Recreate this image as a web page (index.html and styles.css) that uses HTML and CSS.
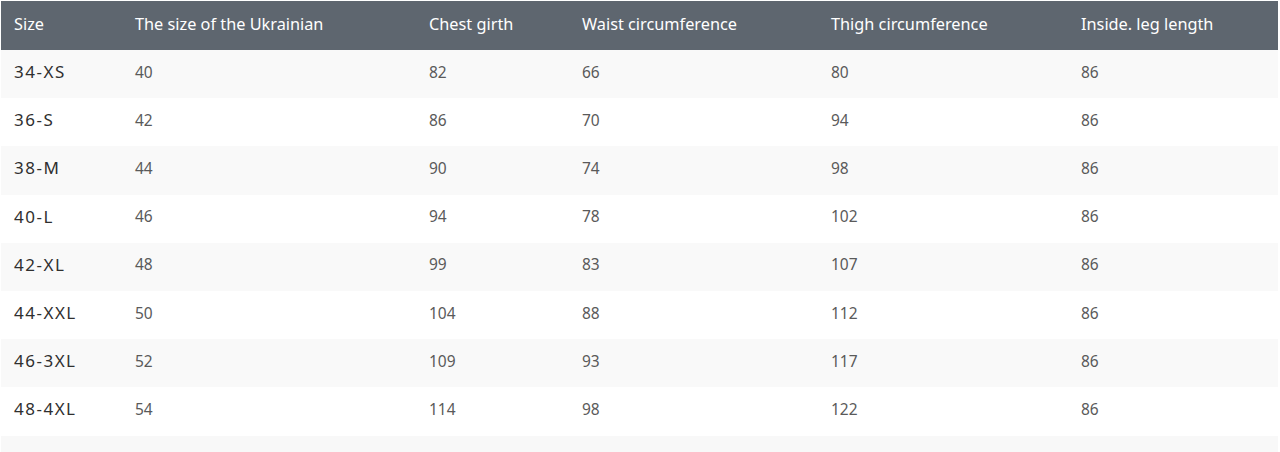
FILE: index.html
```html
<!DOCTYPE html>
<html>
<head>
<meta charset="utf-8">
<link rel="stylesheet" href="styles.css">
</head>
<body>
<div class="page">
  <table class="sizes">
    <colgroup>
      <col class="c1"><col class="c2"><col class="c3"><col class="c4"><col class="c5"><col class="c6">
    </colgroup>
    <thead>
      <tr><th>Size</th><th>The size of the Ukrainian</th><th>Chest girth</th><th>Waist circumference</th><th>Thigh circumference</th><th>Inside. leg length</th></tr>
    </thead>
    <tbody>
      <tr><td>34-XS</td><td>40</td><td>82</td><td>66</td><td>80</td><td>86</td></tr>
      <tr><td>36-S</td><td>42</td><td>86</td><td>70</td><td>94</td><td>86</td></tr>
      <tr><td>38-M</td><td>44</td><td>90</td><td>74</td><td>98</td><td>86</td></tr>
      <tr><td>40-L</td><td>46</td><td>94</td><td>78</td><td>102</td><td>86</td></tr>
      <tr><td>42-XL</td><td>48</td><td>99</td><td>83</td><td>107</td><td>86</td></tr>
      <tr><td>44-XXL</td><td>50</td><td>104</td><td>88</td><td>112</td><td>86</td></tr>
      <tr><td>46-3XL</td><td>52</td><td>109</td><td>93</td><td>117</td><td>86</td></tr>
      <tr><td>48-4XL</td><td>54</td><td>114</td><td>98</td><td>122</td><td>86</td></tr>
    </tbody>
  </table>
  <div class="after"></div>
</div>
</body>
</html>
```
FILE: styles.css
```css
html, body {
  margin: 0;
  padding: 0;
  background: #ffffff;
}
.page {
  width: 1280px;
  height: 452px;
  padding: 1px 2px 0 1px;
  box-sizing: border-box;
  background: #ffffff;
  display: flex;
  flex-direction: column;
}
.sizes {
  width: 1277px;
  border-collapse: collapse;
  table-layout: fixed;
  font-family: "Noto Sans", Lato, sans-serif;
}
.c1 { width: 121px; }
.c2 { width: 294px; }
.c3 { width: 153px; }
.c4 { width: 249px; }
.c5 { width: 250px; }
.c6 { width: 210px; }
.sizes th {
  background: #5e666f;
  color: #ffffff;
  font-weight: 400;
  font-size: 16.3px;
  text-align: left;
  height: 49px;
  padding: 0 0 4px 13px;
  box-sizing: border-box;
}
.sizes td {
  height: 48.2px;
  padding: 0 0 5px 13px;
  box-sizing: border-box;
  font-size: 15.5px;
  color: #5a5a5a;
}
.sizes td:first-child {
  font-size: 17px;
  letter-spacing: 1.5px;
  color: #2f2f2f;
}
.sizes tbody tr:nth-child(odd) td { background: #f9f9f9; }
.sizes tbody tr:nth-child(even) td { background: #ffffff; }
.after {
  flex: 1;
  background: #f8f8f8;
}
```
